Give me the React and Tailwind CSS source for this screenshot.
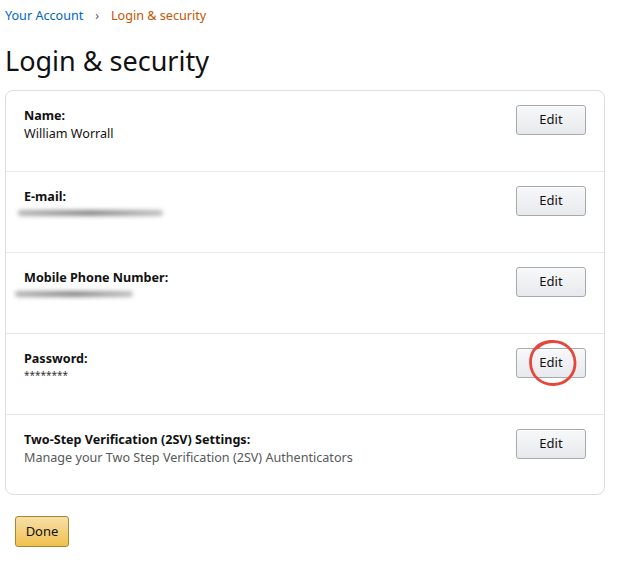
import React from 'react'

const ROWS = [
  { key: 'name', label: 'Name:', value: 'William Worrall' },
  { key: 'email', label: 'E-mail:', redact: { left: -6, width: 145, top: 4 } },
  { key: 'phone', label: 'Mobile Phone Number:', redact: { left: -9, width: 118, top: 4 } },
  { key: 'password', label: 'Password:', value: '********', small: true, circled: true },
  { key: '2sv', label: 'Two-Step Verification (2SV) Settings:', value: 'Manage your Two Step Verification (2SV) Authenticators', muted: true, last: true },
]

function EditButton({ circled }) {
  return (
    <div className="relative">
      <button className="w-[70px] h-[30px] rounded-[3px] border border-[#a6a9ae] bg-gradient-to-b from-[#f7f8fa] to-[#e7e9ec] text-[13px] text-[#111] shadow-[0_1px_0_rgba(255,255,255,0.6)_inset]">
        Edit
      </button>
      {circled && (
        <svg className="absolute left-[12px] top-[-9px] pointer-events-none" width="50" height="48" viewBox="0 0 50 48">
          <path
            d="M24 2.5 C 11 2, 2 12, 2.5 24 C 3 37, 13 46, 26 45.5 C 39 45, 47.5 35, 47 23 C 46.5 11, 37 2.5, 25 2.5 C 18 2.5, 13 5, 9 9"
            fill="none"
            stroke="#e5473d"
            strokeWidth="2.8"
            strokeLinecap="round"
          />
        </svg>
      )}
    </div>
  )
}

export default function App() {
  return (
    <div className="w-[630px] h-[574px] bg-white pl-[5px] pt-[6px] font-['Noto_Sans',sans-serif] text-[#111]">
      <div className="flex items-center h-[20px] text-[12.6px]">
        <span className="text-[#0066c0]">Your Account</span>
        <span className="text-[#555] mx-[12px] text-[12px]">›</span>
        <span className="text-[#c45500]">Login &amp; security</span>
      </div>

      <h1 className="mt-[18px] text-[27px] leading-[34px] font-normal">Login &amp; security</h1>

      <div className="mt-[12px] w-[600px] rounded-[8px] border border-[#ddd]">
        {ROWS.map(row => (
          <div
            key={row.key}
            className={`flex items-start justify-between pl-[18px] pr-[18px] pt-[14px] ${row.last ? 'h-[79px]' : 'h-[81px] border-b border-[#e7e7e7]'}`}
          >
            <div className="pt-[2px] text-[12.6px] leading-[18px]">
              <div className="font-bold">{row.label}</div>
              {row.value && (
                <div className={row.muted ? 'text-[#565959]' : row.small ? 'text-[10px] leading-[14px] text-[#333]' : ''}>
                  {row.value}
                </div>
              )}
              {row.redact && (
                <div className="relative h-[14px]">
                  <div
                    className="absolute h-[6px] rounded-full bg-gradient-to-r from-[#b5b5b5] via-[#8a8a8a] to-[#c0c0c0] blur-[2px]"
                    style={{ left: row.redact.left, width: row.redact.width, top: row.redact.top }}
                  />
                </div>
              )}
            </div>
            <EditButton circled={row.circled} />
          </div>
        ))}
      </div>

      <button className="mt-[21px] ml-[10px] w-[54px] h-[31px] rounded-[3px] border border-[#a88734] bg-gradient-to-b from-[#f7dfa5] to-[#f0c14b] text-[13px] text-[#111]">
        Done
      </button>
    </div>
  )
}
